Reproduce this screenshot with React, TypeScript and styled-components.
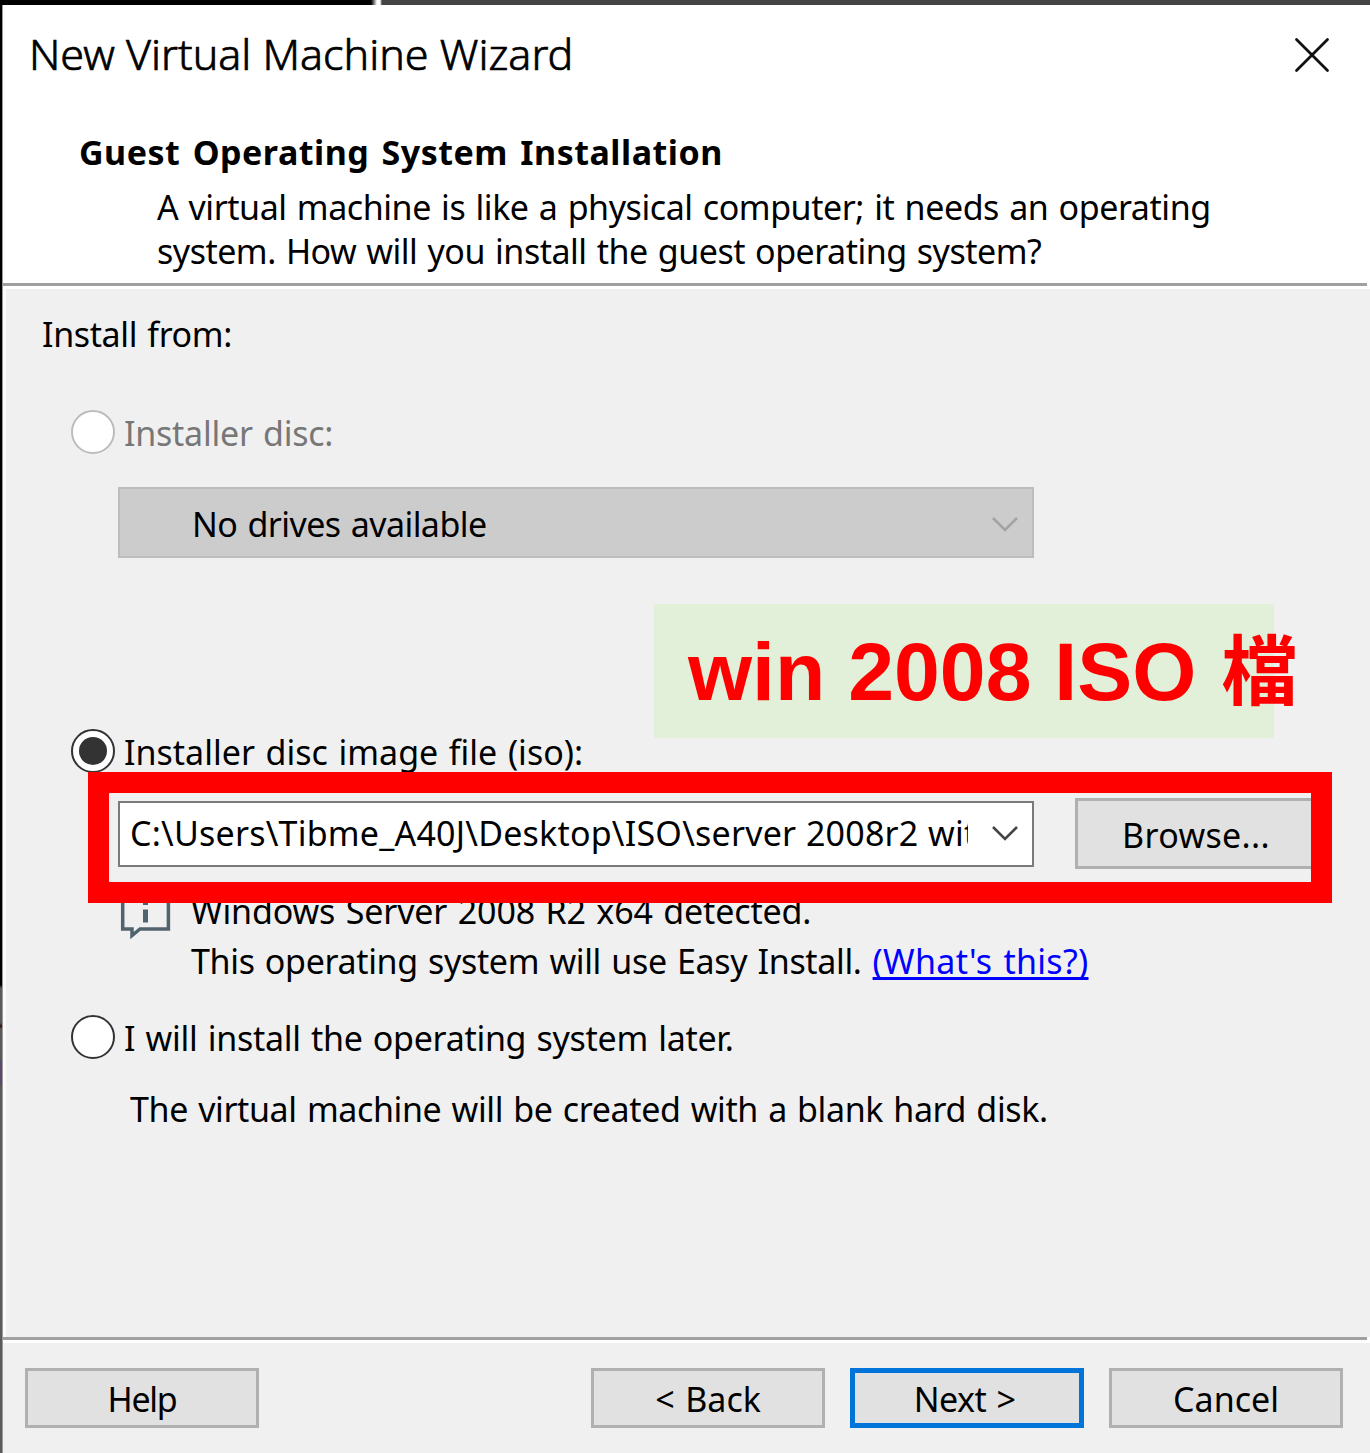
import React from "react";
import styled, { createGlobalStyle } from "styled-components";

const GlobalStyle = createGlobalStyle`
  * { box-sizing: border-box; }
  body { margin: 0; background: #000; overflow: hidden; }
`;

const Desktop = styled.div`
  position: relative;
  display: flex;
  width: 1370px;
  height: 1453px;
  padding: 5px 0 0 2px;
  overflow: hidden;
  font-family: "Noto Sans", "Open Sans", sans-serif;
  background:
    linear-gradient(90deg, #000 0 371px, #4a4a4a 373px, #fff 377px 380px, #444 382px) 0 0 / 100% 5px no-repeat,
    linear-gradient(#000 0 985px, #5a5a5a 988px 1023px, #2a1005 1026px, #5a5a5a 1029px 1059px, #5b4a6b 1062px 1084px, #5a5a5a 1087px) 0 0 / 3px 100% no-repeat,
    #555;
`;

const Dialog = styled.main`
  display: flex;
  flex-direction: column;
  flex: 1;
  border-left: 1px solid #9a9a9a;
  background: #fff;
`;

const Header = styled.header`
  height: 278px;
  padding: 22px 40px 0 26px;
`;

const TitleBar = styled.div`
  display: flex;
  justify-content: space-between;
  height: 50px;
`;

const Text = styled.span<{ $track?: number; $word?: number; $line?: number }>`
  display: block;
  font-size: 34px;
  line-height: ${(p) => p.$line ?? 44}px;
  letter-spacing: ${(p) => p.$track ?? 0}px;
  word-spacing: ${(p) => p.$word ?? 1.8}px;
  white-space: pre;
`;

const Title = styled(Text)`
  padding-top: 2px;
  font-size: 43px;
  font-weight: 300;
  -webkit-text-stroke: 0.7px #000;
`;

const CloseIcon = styled.svg`
  width: 36px;
  height: 36px;
  margin-top: 10px;
`;

const Heading = styled(Text)`
  margin: 53px 0 0 50px;
  font-weight: 700;
`;

const Description = styled.div`
  margin: 11px 0 0 128px;
`;

const Separator = styled.div`
  flex: none;
  height: 6px;
  width: 1364px;
  border-top: 3px solid #a0a0a0;
  background: #fff;
`;

const Body = styled.section`
  height: 1048px;
  flex: none;
  padding: 23px 0 0 36px;
  border-left: 3px solid #fafafa;
  background: #f0f0f0;
`;

const RadioRow = styled.label<{ $top: number; $disabled?: boolean }>`
  display: flex;
  align-items: center;
  gap: 9px;
  height: 44px;
  margin: ${(p) => p.$top}px 0 0 29px;
  color: ${(p) => (p.$disabled ? "#777" : "#000")};
  ${Text} {
    padding-top: 2px;
  }
`;

const Dot = styled.span<{ $disabled?: boolean; $checked?: boolean }>`
  display: grid;
  place-items: center;
  width: 44px;
  height: 44px;
  border: 2px solid ${(p) => (p.$disabled ? "#bcbcbc" : "#333")};
  border-radius: 50%;
  background: #fff;
  &::after {
    content: "";
    width: 28px;
    height: 28px;
    border-radius: 50%;
    background: ${(p) => (p.$checked ? "#333" : "transparent")};
  }
`;

const Combo = styled.div<{ $disabled?: boolean }>`
  display: flex;
  align-items: center;
  justify-content: space-between;
  width: 916px;
  height: ${(p) => (p.$disabled ? 71 : 66)}px;
  padding: ${(p) => (p.$disabled ? "3px 13px 0 72px" : "0 13px 2px 10px")};
  border: 2px solid ${(p) => (p.$disabled ? "#bdbdbd" : "#7a7a7a")};
  background: ${(p) => (p.$disabled ? "#ccc" : "#fff")};
`;

const DriveRow = styled.div`
  margin: 33px 0 0 76px;
`;

const PathClip = styled.div`
  width: 838px;
  overflow: hidden;
`;

const Chevron = styled.svg`
  width: 28px;
  height: 18px;
`;

const SourceRow = styled.div`
  display: flex;
  align-items: center;
  gap: 41px;
  height: 71px;
  margin: 25px 0 0 76px;
`;

const Button = styled.button<{ $primary?: boolean; $width?: number; $height?: number }>`
  display: flex;
  align-items: center;
  justify-content: center;
  width: ${(p) => p.$width ?? 234}px;
  height: ${(p) => p.$height ?? 60}px;
  padding: ${(p) => (p.$primary ? "2px 5px 0 0" : "2px 0 0")};
  border: ${(p) => (p.$primary ? "5px solid #0074d9" : "3px solid #b0b0b0")};
  background: #e1e1e1;
  color: #000;
  font-family: inherit;
`;

const InfoRow = styled.div`
  display: flex;
  height: 100px;
  margin: 17px 0 0 76px;
`;

const InfoIcon = styled.svg`
  width: 54px;
  height: 56px;
  margin-right: 19px;
`;

const DetectedLine = styled.div`
  display: flex;
  gap: 11px;
`;

const HelpLink = styled.a`
  color: #00f;
  text-decoration: underline;
  text-decoration-thickness: 3px;
  text-underline-offset: 3px;
  text-decoration-skip-ink: none;
`;

const LaterNote = styled.div`
  margin: 28px 0 0 88px;
`;

const Footer = styled.footer`
  display: flex;
  flex: 1;
  align-items: flex-start;
  gap: 25px;
  padding: 25px 27px 0 22px;
  background: #f0f0f0;
`;

const Spacer = styled.div`
  flex: 1;
`;

const Note = styled.div`
  position: absolute;
  left: 654px;
  top: 604px;
  display: flex;
  align-items: center;
  width: 620px;
  height: 134px;
  padding-left: 34px;
  background: #e2efd9;
  color: #f00;
  font: 700 82.4px/134px "Liberation Sans", "Noto Sans CJK TC", sans-serif;
  white-space: pre;
`;

const NoteHan = styled.span`
  padding: 0 0 11px 2px;
  font: 700 76.5px/134px "Noto Sans CJK TC", sans-serif;
`;

const Highlight = styled.div`
  position: absolute;
  left: 88px;
  top: 772px;
  width: 1244px;
  height: 131px;
  border: 21px solid #f00;
`;

function Arrow({ color }: { color: string }) {
  return (
    <Chevron viewBox="0 0 28 18" fill="none" stroke={color} strokeWidth="2.600">
      <path d="M2 3 L14 15 L26 3" />
    </Chevron>
  );
}

export default function App() {
  return (
    <Desktop>
      <GlobalStyle />
      <Dialog>
        <Header>
          <TitleBar>
            <Title $line={50} $word={0}>New Virtual Machine Wizard</Title>
            <CloseIcon viewBox="0 0 36 36" stroke="#111" strokeWidth="2.8" strokeLinecap="round">
              <path d="M2.500 2.500 L33.500 33.500 M33.500 2.500 L2.500 33.500" />
            </CloseIcon>
          </TitleBar>
          <Heading $track={0.5} $word={3}>Guest Operating System Installation</Heading>
          <Description>
            <Text $track={-0.44}>A virtual machine is like a physical computer; it needs an operating</Text>
            <Text $track={-0.5}>system. How will you install the guest operating system?</Text>
          </Description>
        </Header>
        <Separator />
        <Body>
          <Text $track={-0.38}>Install from:</Text>
          <RadioRow $top={54} $disabled>
            <Dot $disabled />
            <Text $track={-0.25}>Installer disc:</Text>
          </RadioRow>
          <DriveRow>
            <Combo $disabled>
              <Text $track={-0.55}>No drives available</Text>
              <Arrow color="#a3a3a3" />
            </Combo>
          </DriveRow>
          <RadioRow $top={171}>
            <Dot $checked />
            <Text>Installer disc image file (iso):</Text>
          </RadioRow>
          <SourceRow>
            <Combo>
              <PathClip>
                <Text $track={0.22} $word={0.5}>{"C:\\Users\\Tibme_A40J\\Desktop\\ISO\\server 2008r2 wit"}</Text>
              </PathClip>
              <Arrow color="#444" />
            </Combo>
            <Button $width={242} $height={71}>
              <Text $track={0.35}>Browse...</Text>
            </Button>
          </SourceRow>
          <InfoRow>
            <InfoIcon viewBox="0 0 54 56" fill="none" stroke="#51636f" strokeWidth="3.500">
              <path d="M4.700 3 H50.400 V43 H22 L14 49.500 V43 H4.700 Z" />
              <path d="M27.500 23.500 V36.500 M27.500 14 V19" strokeWidth="5" />
            </InfoIcon>
            <div>
              <Text $line={50} $track={-0.14}>Windows Server 2008 R2 x64 detected.</Text>
              <DetectedLine>
                <Text $line={50} $track={-0.35}>This operating system will use Easy Install.</Text>
                <HelpLink><Text $line={50} $track={0.3}>(What's this?)</Text></HelpLink>
              </DetectedLine>
            </div>
          </InfoRow>
          <RadioRow $top={29}>
            <Dot />
            <Text $track={-0.3}>I will install the operating system later.</Text>
          </RadioRow>
          <LaterNote>
            <Text $track={-0.39}>The virtual machine will be created with a blank hard disk.</Text>
          </LaterNote>
        </Body>
        <Separator />
        <Footer>
          <Button><Text $track={-1.3}>Help</Text></Button>
          <Spacer />
          <Button><Text>{"< Back"}</Text></Button>
          <Button $primary><Text $track={-0.5}>{"Next >"}</Text></Button>
          <Button><Text>Cancel</Text></Button>
        </Footer>
      </Dialog>
      <Note>win 2008 ISO <NoteHan>檔</NoteHan></Note>
      <Highlight />
    </Desktop>
  );
}
